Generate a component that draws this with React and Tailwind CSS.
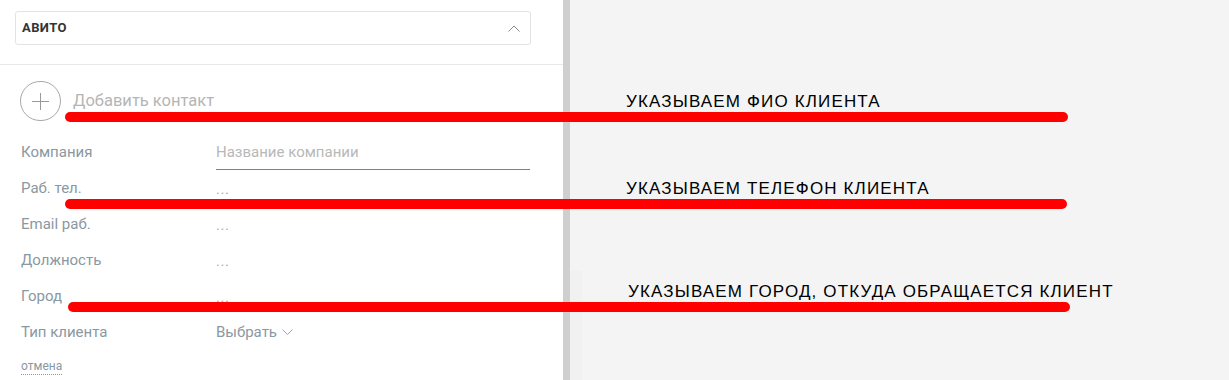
import React from 'react';

const rows = [
  { label: 'Раб. тел.' },
  { label: 'Email раб.' },
  { label: 'Должность' },
  { label: 'Город' },
];

const notes = [
  { text: 'УКАЗЫВАЕМ ФИО КЛИЕНТА', cls: '' },
  { text: 'УКАЗЫВАЕМ ТЕЛЕФОН КЛИЕНТА', cls: 'mt-[67px]' },
  { text: 'УКАЗЫВАЕМ ГОРОД, ОТКУДА ОБРАЩАЕТСЯ КЛИЕНТ', cls: 'mt-[83px] ml-[2px]' },
];

export default function App() {
  return (
    <div className="relative flex w-[1229px] h-[380px] overflow-hidden bg-white font-['Roboto',sans-serif]">
      {/* card panel */}
      <div className="w-[563px] shrink-0 bg-white">
        <div className="pt-[11px] pl-[15px]">
          <div className="flex items-center justify-between w-[516px] h-[34px] border border-[#e3e3e3] rounded-[3px] pl-[6px] pr-[10px]">
            <span className="text-[13px] font-bold tracking-[0.4px] text-[#333]">АВИТО</span>
            <svg width="12" height="7" viewBox="0 0 12 7" fill="none">
              <path d="M0.5 6.5 L6 1 L11.5 6.5" stroke="#8a8a8a" strokeWidth="1" />
            </svg>
          </div>
        </div>
        <div className="mt-[19px] h-px bg-[#e8e8e8]" />

        <div className="flex items-center pl-[20px] mt-[16px]">
          <div className="w-[41px] h-[40px] rounded-full border border-[#a8a8a8] flex items-center justify-center">
            <svg width="19" height="19" viewBox="0 0 19 19">
              <path d="M9.5 1 V18 M1 9.5 H18" stroke="#9a9a9a" strokeWidth="1" />
            </svg>
          </div>
          <span className="ml-[12px] text-[16.5px] text-[#b5b5b5]">Добавить контакт</span>
        </div>

        <div className="mt-[13px] pl-[21px] text-[15px]">
          <div className="flex items-center h-[36px]">
            <span className="w-[195px] text-[#8a98a2]">Компания</span>
            <div className="w-[314px] mt-[2px] flex flex-col">
              <span className="h-[33px] flex items-center text-[#b8b8b8]">Название компании</span>
              <div className="h-px bg-[#1e9cf0]" />
            </div>
          </div>
          {rows.map(r => (
            <div key={r.label} className="flex items-center h-[36px]">
              <span className="w-[195px] text-[#8a98a2]">{r.label}</span>
              <span className="text-[#adadad] text-[15px] tracking-[0.5px] pt-[2px]">...</span>
            </div>
          ))}
          <div className="flex items-center h-[36px]">
            <span className="w-[195px] text-[#8a98a2]">Тип клиента</span>
            <span className="flex items-center gap-[5px] text-[#8a98a2]">
              Выбрать
              <svg width="11" height="7" viewBox="0 0 11 7" fill="none">
                <path d="M0.5 0.5 L5.5 5.5 L10.5 0.5" stroke="#9aa5ad" strokeWidth="1" />
              </svg>
            </span>
          </div>
          <div className="h-[34px] flex items-center">
            <span className="text-[12px] text-[#8a98a2] border-b border-dotted border-b-[#8a98a2] leading-[15px]">отмена</span>
          </div>
        </div>
      </div>

      <div className="w-[7px] shrink-0 bg-[#cfcfcf]" />

      {/* annotations area */}
      <div className="flex-1 flex bg-[#f4f4f4]">
        <div className="w-[12px] mt-[270px] bg-[#f1f1f1]" />
        <div className="pt-[92px] pl-[44px] flex flex-col items-start font-['Liberation_Sans',Arial,sans-serif] text-[17px] tracking-[1.15px] leading-[20px] text-black">
          {notes.map(n => (
            <div key={n.text} className={n.cls}>{n.text}</div>
          ))}
        </div>
      </div>

      {/* red marker strokes */}
      <div className="absolute left-[65px] top-[112px] w-[1003px] h-[10px] rounded-full bg-[#ff0000]" />
      <div className="absolute left-[65px] top-[199px] w-[1002px] h-[10px] rounded-full bg-[#ff0000]" />
      <div className="absolute left-[68px] top-[302px] w-[1002px] h-[10px] rounded-full bg-[#ff0000]" />
    </div>
  );
}
